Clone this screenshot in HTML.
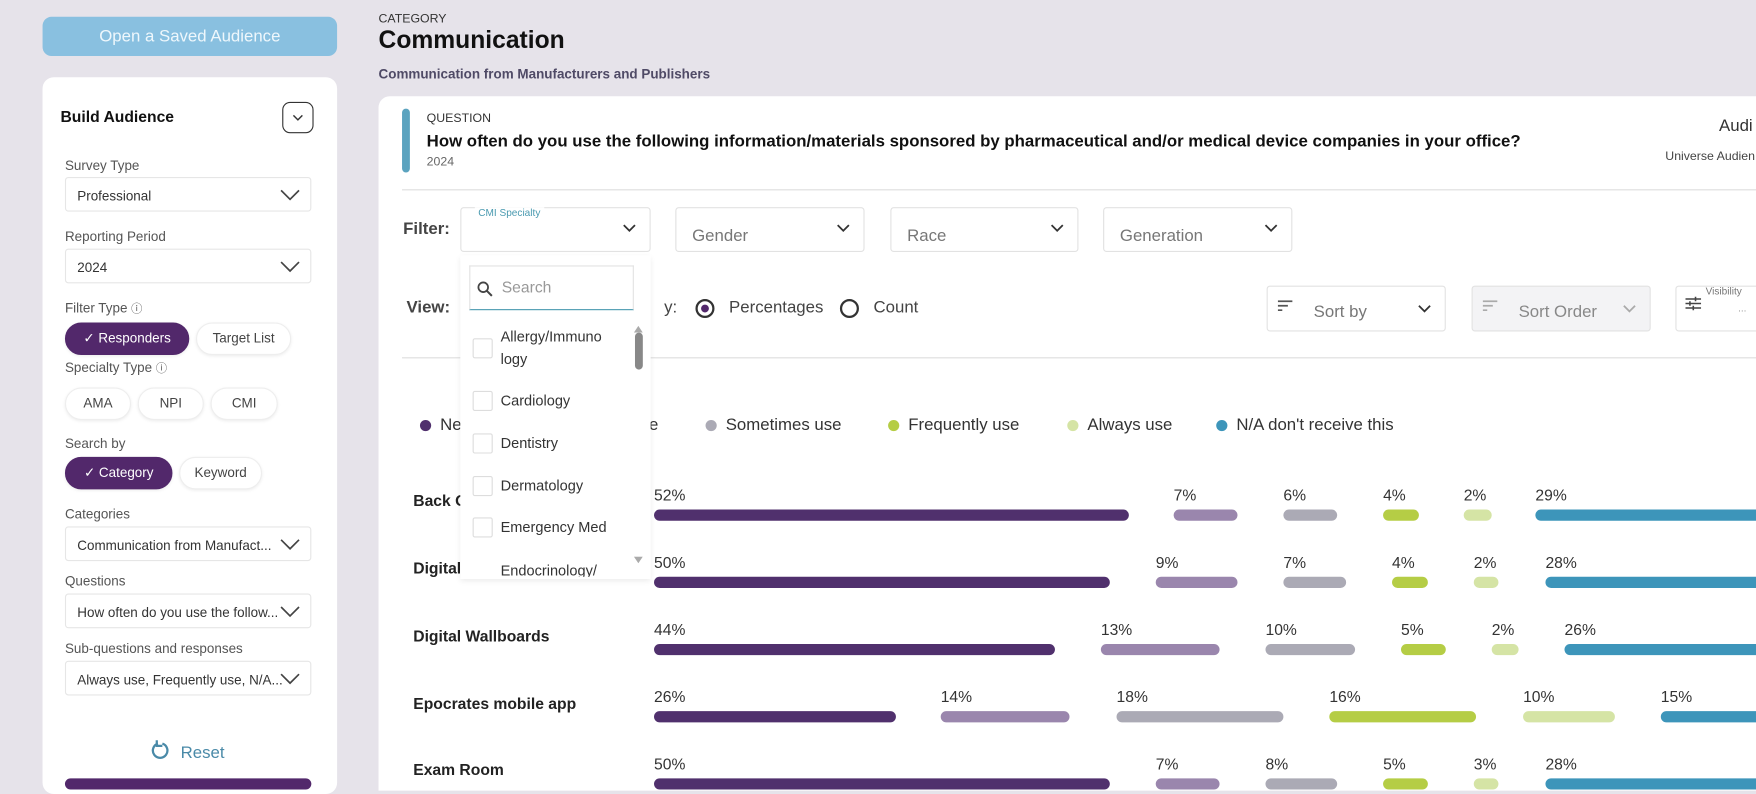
<!DOCTYPE html>
<html><head><meta charset="utf-8"><style>
*{box-sizing:border-box;margin:0;padding:0}
body{width:1756px;height:783px;overflow:hidden;background:#e6e3ea;font-family:"Liberation Sans",sans-serif;color:#222}
#w{position:absolute;left:0;top:0;width:1568px;height:700px;transform:scale(1.1199);transform-origin:0 0}
.a{position:absolute}
.lbl{position:absolute;left:58px;font-size:12px;color:#555}
.sel{position:absolute;left:58px;width:220px;height:31px;border:1px solid #e6e6e6;border-radius:3px;background:#fff;font-size:12px;color:#333;padding:9px 10px;white-space:nowrap}
.chev{position:absolute;right:8px;top:8px;width:20px;height:14px}
.pill{position:absolute;height:29px;border-radius:15px;border:1px solid #eee;box-shadow:0 1px 3px rgba(0,0,0,.08);font-size:12px;color:#444;text-align:center;line-height:27px;background:#fff}
.pill.on{background:#52286b;color:#fff;border-color:#52286b}
.fs{position:absolute;top:185px;height:40px;border:1px solid #e2e2e2;border-radius:3px;background:#fff;font-size:15px;color:#777;padding:16px 14px 0}
.b{position:absolute;height:10px;border-radius:5px}
.p{position:absolute;font-size:14px;color:#333}
.rl{position:absolute;left:369px;font-size:14px;font-weight:bold;color:#222}
.c1{background:#50306d}.c2{background:#9a86ad}.c3{background:#abaab5}.c4{background:#b5cd45}.c5{background:#d5e4a5}.c6{background:#3d95ba}
.dot{display:inline-block;width:10px;height:10px;border-radius:50%;margin-right:8px;vertical-align:-1px}
.cb{position:absolute;left:422px;width:18px;height:18px;border:1px solid #ddd;border-radius:2px;background:#fff}
.it{position:absolute;left:447px;font-size:13px;color:#333;line-height:20px}
</style></head><body><div id="w">
<div class="a" style="left:38px;top:15px;width:263px;height:35px;background:#89c0e0;border-radius:8px;color:#eef7fc;font-size:15px;text-align:center;line-height:35px">Open a Saved Audience</div>
<div class="a" style="left:38px;top:69px;width:263px;height:640px;background:#fff;border-radius:10px"></div>
<div class="a" style="left:54px;top:96px;font-size:14px;font-weight:bold;color:#111">Build Audience</div>
<div class="a" style="left:252px;top:91px;width:28px;height:28px;border:1px solid #333;border-radius:7px"><svg width="26" height="26" viewBox="0 0 26 26"><path d="M9 11l4 4 4-4" fill="none" stroke="#333" stroke-width="1.3"/></svg></div>
<div class="lbl" style="top:141px">Survey Type</div>
<div class="sel" style="top:158px">Professional<svg class="chev" viewBox="0 0 20 14"><path d="M2 3l8 8 8-8" fill="none" stroke="#444" stroke-width="1.5"/></svg></div>
<div class="lbl" style="top:204px">Reporting Period</div>
<div class="sel" style="top:222px">2024<svg class="chev" viewBox="0 0 20 14"><path d="M2 3l8 8 8-8" fill="none" stroke="#444" stroke-width="1.5"/></svg></div>
<div class="lbl" style="top:267px">Filter Type <span style="font-size:10px">ⓘ</span></div>
<div class="pill on" style="left:58px;top:288px;width:111px">✓ Responders</div>
<div class="pill" style="left:175px;top:288px;width:85px">Target List</div>
<div class="lbl" style="top:320px">Specialty Type <span style="font-size:10px">ⓘ</span></div>
<div class="pill" style="left:58px;top:346px;width:59px">AMA</div>
<div class="pill" style="left:123px;top:346px;width:59px">NPI</div>
<div class="pill" style="left:188px;top:346px;width:60px">CMI</div>
<div class="lbl" style="top:389px">Search by</div>
<div class="pill on" style="left:58px;top:408px;width:96px">✓ Category</div>
<div class="pill" style="left:160px;top:408px;width:74px">Keyword</div>
<div class="lbl" style="top:452px">Categories</div>
<div class="sel" style="top:470px">Communication from Manufact...<svg class="chev" viewBox="0 0 20 14"><path d="M2 3l8 8 8-8" fill="none" stroke="#444" stroke-width="1.5"/></svg></div>
<div class="lbl" style="top:512px">Questions</div>
<div class="sel" style="top:530px">How often do you use the follow...<svg class="chev" viewBox="0 0 20 14"><path d="M2 3l8 8 8-8" fill="none" stroke="#444" stroke-width="1.5"/></svg></div>
<div class="lbl" style="top:572px">Sub-questions and responses</div>
<div class="sel" style="top:590px">Always use, Frequently use, N/A...<svg class="chev" viewBox="0 0 20 14"><path d="M2 3l8 8 8-8" fill="none" stroke="#444" stroke-width="1.5"/></svg></div>
<div class="a" style="left:135px;top:660px;font-size:15px;color:#4a8aa8"><svg width="18" height="20" viewBox="0 0 18 20" style="vertical-align:-3px"><path d="M6 4a6.5 6.5 0 1 0 4 0" fill="none" stroke="#4a8aa8" stroke-width="2"/><path d="M5 1v5h5" fill="none" stroke="#4a8aa8" stroke-width="2"/></svg>&nbsp; Reset</div>
<div class="a" style="left:58px;top:695px;width:220px;height:10px;background:#52286b;border-radius:6px"></div>
<div class="a" style="left:338px;top:11px;font-size:11px;color:#333">CATEGORY</div>
<div class="a" style="left:338px;top:23px;font-size:22px;font-weight:bold;color:#111">Communication</div>
<div class="a" style="left:338px;top:59px;font-size:12px;font-weight:bold;color:#4f4a66">Communication from Manufacturers and Publishers</div>
<div class="a" style="left:338px;top:86px;width:1240px;height:620px;background:#fff;border-radius:10px 0 0 0"></div>
<div class="a" style="left:359px;top:97px;width:7px;height:57px;background:#5ba3bf;border-radius:4px"></div>
<div class="a" style="left:381px;top:100px;font-size:11px;color:#333">QUESTION</div>
<div class="a" style="left:381px;top:118px;font-size:15px;font-weight:bold;color:#111;white-space:nowrap">How often do you use the following information/materials sponsored by pharmaceutical and/or medical device companies in your office?</div>
<div class="a" style="left:381px;top:139px;font-size:11px;color:#666">2024</div>
<div class="a" style="left:1535px;top:104px;font-size:15px;color:#333">Audi</div>
<div class="a" style="left:1487px;top:134px;font-size:11px;color:#444;white-space:nowrap">Universe Audien</div>
<div class="a" style="left:359px;top:169px;width:1210px;height:1px;background:#ddd"></div>
<div class="a" style="left:360px;top:196px;font-size:15px;font-weight:bold;color:#444">Filter:</div>
<div class="fs" style="left:411px;width:170px"><span class="a" style="left:12px;top:-1px;font-size:9px;color:#4a9ab0;background:#fff;padding:0 3px">CMI Specialty</span><svg class="a" style="right:12px;top:14px" width="12" height="8" viewBox="0 0 12 8"><path d="M1 1l5 5 5-5" fill="none" stroke="#333" stroke-width="1.6"/></svg></div>
<div class="fs" style="left:603px;width:169px">Gender<svg class="a" style="right:12px;top:14px" width="12" height="8" viewBox="0 0 12 8"><path d="M1 1l5 5 5-5" fill="none" stroke="#333" stroke-width="1.6"/></svg></div>
<div class="fs" style="left:795px;width:168px">Race<svg class="a" style="right:12px;top:14px" width="12" height="8" viewBox="0 0 12 8"><path d="M1 1l5 5 5-5" fill="none" stroke="#333" stroke-width="1.6"/></svg></div>
<div class="fs" style="left:985px;width:169px">Generation<svg class="a" style="right:12px;top:14px" width="12" height="8" viewBox="0 0 12 8"><path d="M1 1l5 5 5-5" fill="none" stroke="#333" stroke-width="1.6"/></svg></div>
<div class="a" style="left:363px;top:266px;font-size:15px;font-weight:bold;color:#444">View:</div>
<div class="a" style="left:593px;top:266px;font-size:15px;color:#444">y:</div>
<div class="a" style="left:621px;top:267px;width:17px;height:17px;border:2px solid #333;border-radius:50%"><div class="a" style="left:3px;top:3px;width:7px;height:7px;border-radius:50%;background:#52286b"></div></div>
<div class="a" style="left:651px;top:266px;font-size:15px;color:#444">Percentages</div>
<div class="a" style="left:750px;top:267px;width:17px;height:17px;border:2px solid #333;border-radius:50%"></div>
<div class="a" style="left:780px;top:266px;font-size:15px;color:#444">Count</div>
<div class="a" style="left:1131px;top:255px;width:160px;height:41px;border:1px solid #e2e2e2;border-radius:3px;background:#fff;font-size:15px;color:#777;padding:14px 0 0 41px">Sort by<svg class="a" style="left:9px;top:12px" width="14" height="10" viewBox="0 0 14 10"><path d="M0 1h13M0 5h9M0 9h4" stroke="#555" stroke-width="1.5"/></svg><svg class="a" style="right:12px;top:16px" width="12" height="8" viewBox="0 0 12 8"><path d="M1 1l5 5 5-5" fill="none" stroke="#333" stroke-width="1.6"/></svg></div>
<div class="a" style="left:1314px;top:255px;width:160px;height:41px;border:1px solid #e2e2e2;border-radius:3px;background:#f3f3f5;font-size:15px;color:#888;padding:14px 0 0 41px">Sort Order<svg class="a" style="left:9px;top:12px" width="14" height="10" viewBox="0 0 14 10"><path d="M0 1h13M0 5h9M0 9h4" stroke="#aaa" stroke-width="1.5"/></svg><svg class="a" style="right:12px;top:16px" width="12" height="8" viewBox="0 0 12 8"><path d="M1 1l5 5 5-5" fill="none" stroke="#aaa" stroke-width="1.6"/></svg></div>
<div class="a" style="left:1496px;top:255px;width:80px;height:41px;border:1px solid #e2e2e2;border-radius:3px;background:#fff"><span class="a" style="left:26px;top:-1px;font-size:9px;color:#777">Visibility</span><span class="a" style="left:55px;top:14px;font-size:9px;color:#999">...</span><svg class="a" style="left:8px;top:8px" width="14" height="14" viewBox="0 0 14 14"><path d="M0 3h14M0 7h14M0 11h14M9 1v4M4 5v4M7 9v4" stroke="#444" stroke-width="1.4"/></svg></div>
<div class="a" style="left:359px;top:319px;width:1210px;height:1px;background:#ddd"></div>
<div class="a" style="left:375px;top:371px;font-size:15px;color:#333;white-space:nowrap"><span class="dot c1"></span>Never use</div>
<div class="a" style="left:572px;top:371px;font-size:15px;color:#333">se</div>
<div class="a" style="left:630px;top:371px;font-size:15px;color:#333;white-space:nowrap"><span class="dot c3"></span>Sometimes use</div>
<div class="a" style="left:793px;top:371px;font-size:15px;color:#333;white-space:nowrap"><span class="dot c4"></span>Frequently use</div>
<div class="a" style="left:953px;top:371px;font-size:15px;color:#333;white-space:nowrap"><span class="dot c5"></span>Always use</div>
<div class="a" style="left:1086px;top:371px;font-size:15px;color:#333;white-space:nowrap"><span class="dot c6"></span>N/A don't receive this</div>
<div class="rl" style="top:439px">Back Office</div>
<div class="rl" style="top:499px">Digital</div>
<div class="rl" style="top:560px">Digital Wallboards</div>
<div class="rl" style="top:620px">Epocrates mobile app</div>
<div class="rl" style="top:679px">Exam Room</div>

<div class="p" style="left:584px;top:434px">52%</div><div class="b c1" style="left:584px;top:455px;width:424px"></div>
<div class="p" style="left:1048px;top:434px">7%</div><div class="b c2" style="left:1048px;top:455px;width:57px"></div>
<div class="p" style="left:1146px;top:434px">6%</div><div class="b c3" style="left:1146px;top:455px;width:48px"></div>
<div class="p" style="left:1235px;top:434px">4%</div><div class="b c4" style="left:1235px;top:455px;width:32px"></div>
<div class="p" style="left:1307px;top:434px">2%</div><div class="b c5" style="left:1307px;top:455px;width:25px"></div>
<div class="p" style="left:1371px;top:434px">29%</div><div class="b c6" style="left:1371px;top:455px;width:210px"></div>

<div class="p" style="left:584px;top:494px">50%</div><div class="b c1" style="left:584px;top:515px;width:407px"></div>
<div class="p" style="left:1032px;top:494px">9%</div><div class="b c2" style="left:1032px;top:515px;width:73px"></div>
<div class="p" style="left:1146px;top:494px">7%</div><div class="b c3" style="left:1146px;top:515px;width:56px"></div>
<div class="p" style="left:1243px;top:494px">4%</div><div class="b c4" style="left:1243px;top:515px;width:32px"></div>
<div class="p" style="left:1316px;top:494px">2%</div><div class="b c5" style="left:1316px;top:515px;width:22px"></div>
<div class="p" style="left:1380px;top:494px">28%</div><div class="b c6" style="left:1380px;top:515px;width:200px"></div>

<div class="p" style="left:584px;top:554px">44%</div><div class="b c1" style="left:584px;top:575px;width:358px"></div>
<div class="p" style="left:983px;top:554px">13%</div><div class="b c2" style="left:983px;top:575px;width:106px"></div>
<div class="p" style="left:1130px;top:554px">10%</div><div class="b c3" style="left:1130px;top:575px;width:80px"></div>
<div class="p" style="left:1251px;top:554px">5%</div><div class="b c4" style="left:1251px;top:575px;width:40px"></div>
<div class="p" style="left:1332px;top:554px">2%</div><div class="b c5" style="left:1332px;top:575px;width:24px"></div>
<div class="p" style="left:1397px;top:554px">26%</div><div class="b c6" style="left:1397px;top:575px;width:190px"></div>

<div class="p" style="left:584px;top:614px">26%</div><div class="b c1" style="left:584px;top:635px;width:216px"></div>
<div class="p" style="left:840px;top:614px">14%</div><div class="b c2" style="left:840px;top:635px;width:115px"></div>
<div class="p" style="left:997px;top:614px">18%</div><div class="b c3" style="left:997px;top:635px;width:149px"></div>
<div class="p" style="left:1187px;top:614px">16%</div><div class="b c4" style="left:1187px;top:635px;width:131px"></div>
<div class="p" style="left:1360px;top:614px">10%</div><div class="b c5" style="left:1360px;top:635px;width:82px"></div>
<div class="p" style="left:1483px;top:614px">15%</div><div class="b c6" style="left:1483px;top:635px;width:100px"></div>

<div class="p" style="left:584px;top:674px">50%</div><div class="b c1" style="left:584px;top:695px;width:407px"></div>
<div class="p" style="left:1032px;top:674px">7%</div><div class="b c2" style="left:1032px;top:695px;width:57px"></div>
<div class="p" style="left:1130px;top:674px">8%</div><div class="b c3" style="left:1130px;top:695px;width:64px"></div>
<div class="p" style="left:1235px;top:674px">5%</div><div class="b c4" style="left:1235px;top:695px;width:40px"></div>
<div class="p" style="left:1316px;top:674px">3%</div><div class="b c5" style="left:1316px;top:695px;width:22px"></div>
<div class="p" style="left:1380px;top:674px">28%</div><div class="b c6" style="left:1380px;top:695px;width:200px"></div>

<div class="a" style="left:411px;top:228px;width:170px;height:289px;background:#fff;box-shadow:0 2px 5px rgba(0,0,0,.08);overflow:hidden">
<div class="a" style="left:8px;top:9px;width:147px;height:40px;border:1px solid #e2e2e2;border-bottom:1.5px solid #4a9ab0;font-size:14px;color:#999;padding:10px 0 0 28px"><svg class="a" style="left:6px;top:13px" width="14" height="14" viewBox="0 0 14 14"><circle cx="5.5" cy="5.5" r="4.3" fill="none" stroke="#444" stroke-width="1.6"/><path d="M8.7 8.7l4.5 4.5" stroke="#444" stroke-width="1.8"/></svg>Search</div>
<svg class="a" style="left:155px;top:63px" width="8" height="6" viewBox="0 0 8 6"><path d="M4 0l4 6H0z" fill="#aaa"/></svg>
<div class="a" style="left:156px;top:69px;width:7px;height:33px;background:#888;border-radius:4px"></div>
<svg class="a" style="left:155px;top:269px" width="8" height="6" viewBox="0 0 8 6"><path d="M0 0h8L4 6z" fill="#aaa"/></svg>
</div>
<div class="cb" style="top:302px"></div><div class="it" style="top:291px">Allergy/Immuno<br>logy</div>
<div class="cb" style="top:349px"></div><div class="it" style="top:348px">Cardiology</div>
<div class="cb" style="top:387px"></div><div class="it" style="top:386px">Dentistry</div>
<div class="cb" style="top:425px"></div><div class="it" style="top:424px">Dermatology</div>
<div class="cb" style="top:462px"></div><div class="it" style="top:461px">Emergency Med</div>
<div class="a" style="left:411px;top:497px;width:150px;height:18px;overflow:hidden"><div class="it" style="left:36px;top:3px">Endocrinology/</div></div>
</div></body></html>
